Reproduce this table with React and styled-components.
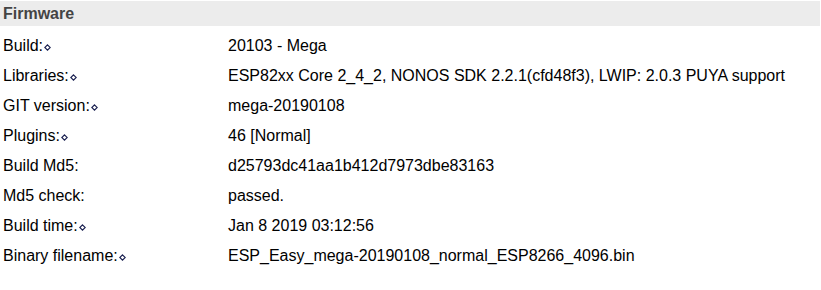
import React from 'react'
import styled, { createGlobalStyle } from 'styled-components';

const GlobalStyle = createGlobalStyle`
    body{
        margin: 0;
        background: #fff;
        font-family: "Liberation Sans", Arial, sans-serif;
        font-size: 16px;
        color: #000;
    }
`;

const rows = [
    { label: 'Build:', value: '20103 - Mega', help: true },
    { label: 'Libraries:', value: 'ESP82xx Core 2_4_2, NONOS SDK 2.2.1(cfd48f3), LWIP: 2.0.3 PUYA support', help: true },
    { label: 'GIT version:', value: 'mega-20190108', help: true },
    { label: 'Plugins:', value: '46 [Normal]', help: true },
    { label: 'Build Md5:', value: 'd25793dc41aa1b412d7973dbe83163' },
    { label: 'Md5 check:', value: 'passed.' },
    { label: 'Build time:', value: 'Jan 8 2019 03:12:56', help: true },
    { label: 'Binary filename:', value: 'ESP_Easy_mega-20190108_normal_ESP8266_4096.bin', help: true },
];

function HelpMark() {
    return (
        <HelpIcon width="7" height="7" viewBox="0 0 7 7">
            <path d="M3.5 0.8 L6.2 3.5 L3.5 6.2 L0.8 3.5 Z" fill="none" stroke="#1a2050" strokeWidth="1.1" />
        </HelpIcon>
    )
}

function App() {
    return (
        <>
            <GlobalStyle />
            <Panel>
                <Header>Firmware</Header>
                {rows.map((r) => (
                    <Row key={r.label}>
                        <Label>{r.label}{r.help && <HelpMark />}</Label>
                        <Value>{r.value}</Value>
                    </Row>
                ))}
            </Panel>
        </>
    )
}

const Panel = styled.div`
    padding-top: 1px;
    width: 821px;
`;

const Header = styled.div`
    height: 25px;
    line-height: 26px;
    background: #ececec;
    color: #444;
    font-weight: bold;
    padding-left: 3px;
    margin-right: 1px;
    margin-bottom: 5px;
`;

const Row = styled.div`
    display: grid;
    grid-template-columns: 225px 1fr;
    height: 30px;
    align-items: center;
    padding-left: 3px;
`;

const Label = styled.div`
    display: flex;
    align-items: center;
`;

const HelpIcon = styled.svg`
    margin-left: 1px;
    margin-top: 2px;
`;

const Value = styled.div``;

export default App;
